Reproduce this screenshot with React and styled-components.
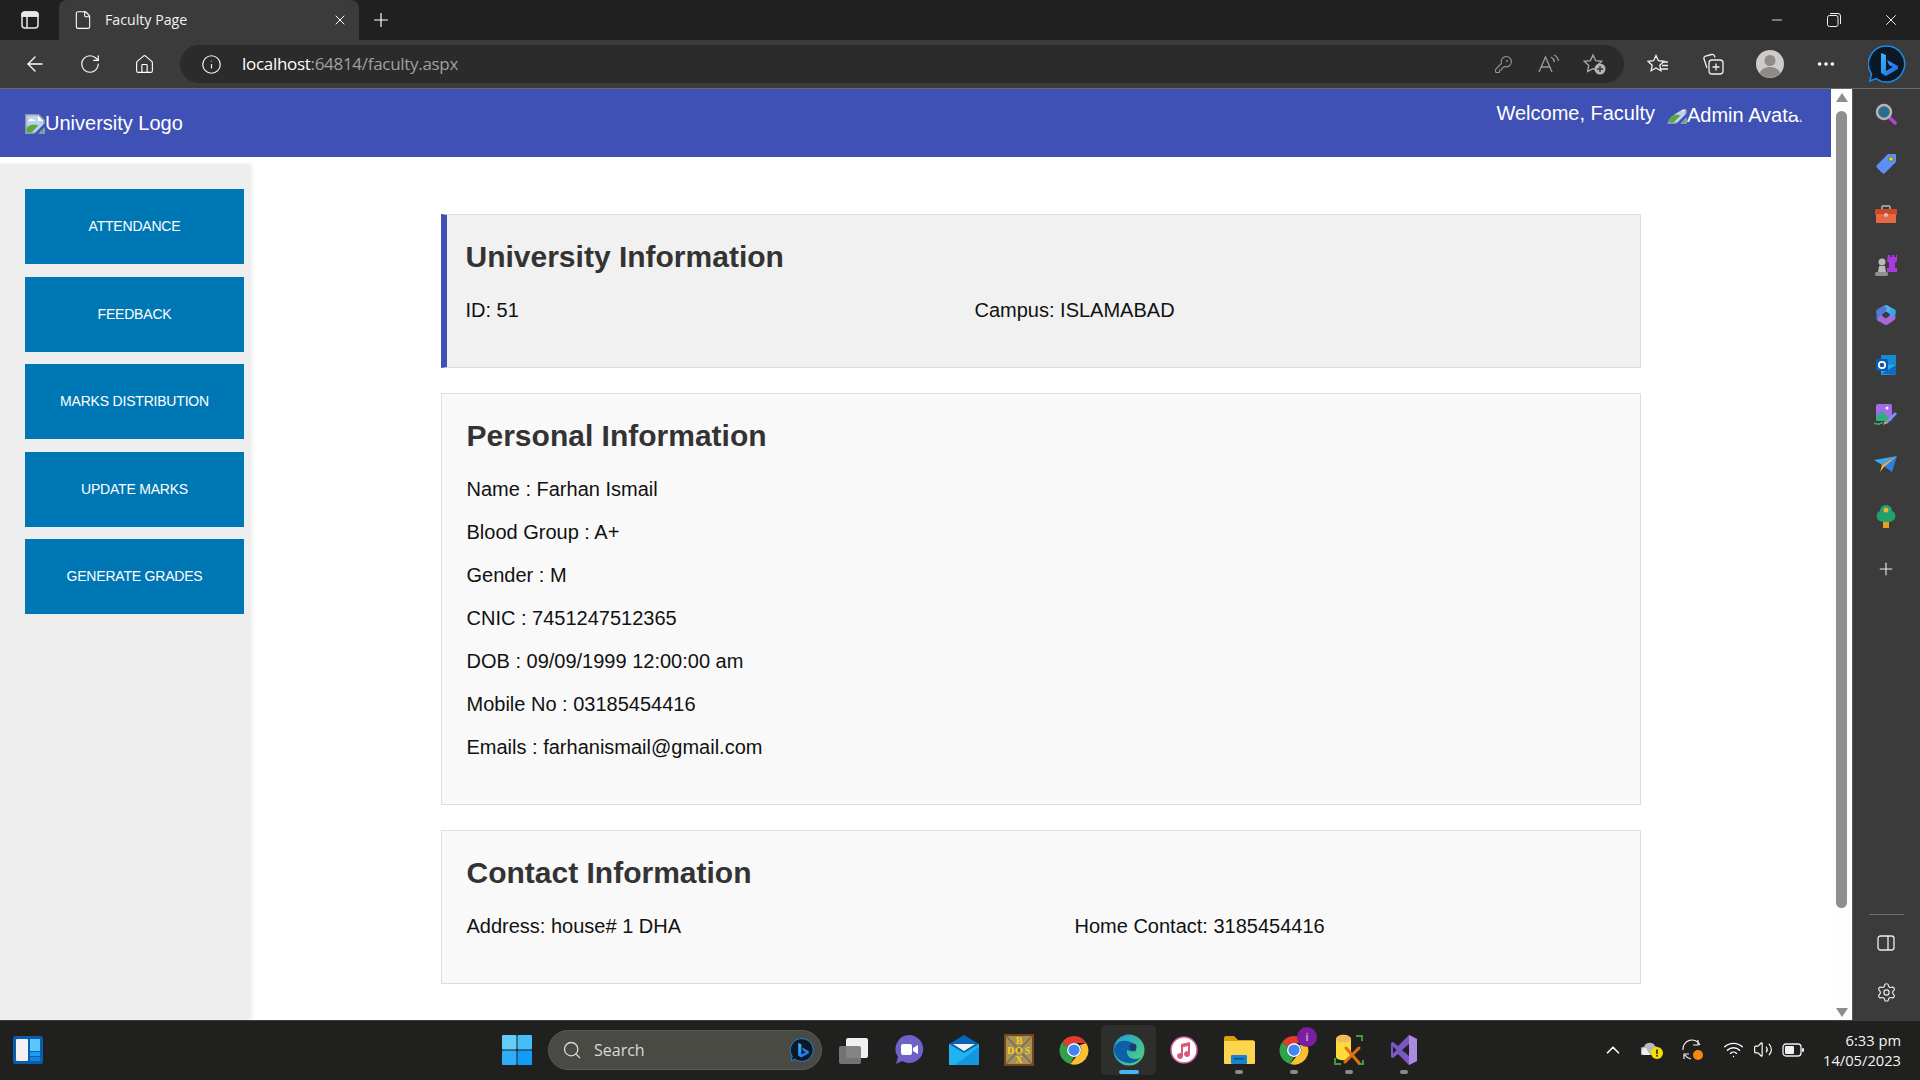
import React from "react";
import styled, { createGlobalStyle } from "styled-components";
import {
  ArrowLeft,
  RotateCw,
  Home,
  Info,
  KeyRound,
  Plus,
  X,
  Minus,
  Search,
  ChevronUp,
  Wifi,
  Volume2,
  Ellipsis,
  Settings,
  File,
} from "lucide-react";

const GlobalStyle = createGlobalStyle`
  html, body {
    margin: 0;
    padding: 0;
    height: 100%;
    overflow: hidden;
    background: #fff;
  }
  * {
    box-sizing: border-box;
  }
`;

const Screen = styled.div`
  width: 1920px;
  height: 1080px;
  display: flex;
  flex-direction: column;
  font-family: "Liberation Sans", Arial, sans-serif;
`;

/* browser chrome */
const TabStrip = styled.div`
  height: 40px;
  flex: none;
  background: #202020;
  display: flex;
  align-items: stretch;
  color: #fff;
`;

const TabToggle = styled.div`
  width: 59px;
  display: flex;
  align-items: center;
  justify-content: center;
`;

const Tab = styled.div`
  width: 300px;
  background: #3b3b3b;
  border-radius: 8px 8px 0 0;
  display: flex;
  align-items: center;
  padding: 0 11px 0 14px;
`;

const TabTitle = styled.span`
  flex: 1;
  margin-left: 12px;
  margin-bottom: 2px;
  font-family: "Open Sans", sans-serif;
  font-size: 14.2px;
  color: #f2f2f2;
  white-space: nowrap;
`;

const NewTab = styled.div`
  width: 44px;
  display: flex;
  align-items: center;
  justify-content: center;
`;

const WindowControls = styled.div`
  margin-left: auto;
  display: flex;
  padding-right: 1px;
`;

const WindowButton = styled.div`
  width: 57px;
  display: flex;
  align-items: center;
  justify-content: center;
`;

const Toolbar = styled.div`
  height: 49px;
  flex: none;
  background: #3b3b3b;
  border-bottom: 1px solid #6a6a6a;
  display: flex;
  align-items: flex-start;
  padding: 5px 0 0 7px;
  color: #fff;
`;

const ToolButton = styled.div`
  width: ${(p) => p.$w || 55}px;
  height: 38px;
  flex: none;
  display: flex;
  align-items: center;
  justify-content: center;
`;

const AddressBar = styled.div`
  width: 1443.5px;
  margin-left: 8px;
  height: 38px;
  background: #2b2b2b;
  border-radius: 19px;
  display: flex;
  align-items: center;
  padding: 0 6px 0 21px;
`;

const AddressText = styled.div`
  flex: 1;
  margin-left: 20px;
  margin-bottom: 2px;
  font-family: "Open Sans", sans-serif;
  font-size: 17px;
  letter-spacing: -0.3px;
  color: #a0a0a0;
  white-space: nowrap;
  strong {
    font-weight: 400;
    color: #fff;
  }
`;

const AddressAction = styled.div`
  width: 45.5px;
  display: flex;
  align-items: center;
  justify-content: center;
  color: #9a9a9a;
`;

const ToolbarGroup = styled.div`
  display: flex;
  margin-left: 7px;
`;

const BingSlot = styled.div`
  width: 58px;
  height: 38px;
  margin-left: 4px;
  display: flex;
  align-items: center;
  justify-content: center;
`;

/* page */
const Viewport = styled.div`
  flex: 1;
  min-height: 0;
  display: flex;
`;

const Page = styled.div`
  width: 1831px;
  flex: none;
  display: flex;
  flex-direction: column;
  background: #fff;
`;

const Header = styled.header`
  height: 68px;
  flex: none;
  background: #3f51b5;
  color: #fff;
  display: flex;
  justify-content: space-between;
  align-items: flex-start;
  padding: 0 28px 0 25px;
  font-size: 20px;
`;

const Logo = styled.div`
  display: flex;
  align-items: center;
  margin-top: 23px;
`;

const UserArea = styled.div`
  display: flex;
  align-items: flex-start;
  margin-top: 12px;
`;

const Welcome = styled.span`
  line-height: 24px;
`;

/* the avatar image failed to load, its alt text is cut by the round mask */
const AvatarBox = styled.div`
  width: 136px;
  height: 50px;
  margin-left: 12px;
  padding-top: 3px;
  display: flex;
  align-items: flex-start;
  border-radius: 50%;
  overflow: hidden;
  white-space: nowrap;
  line-height: 22px;
`;

const Body = styled.div`
  flex: 1;
  min-height: 0;
  display: flex;
`;

const SideNav = styled.nav`
  width: 250px;
  flex: none;
  margin-top: 7px;
  background: #eee;
  box-shadow: 2px 0 5px rgba(0, 0, 0, 0.08);
  display: flex;
  flex-direction: column;
  gap: 12.5px;
  padding: 25px 6px 0 25px;
`;

const NavButton = styled.button`
  height: 75px;
  border: none;
  background: #0077b5;
  color: #fff;
  font-family: "Liberation Sans", Arial, sans-serif;
  font-size: 14px;
  letter-spacing: -0.2px;
  padding: 0 0 1px;
`;

const Main = styled.main`
  flex: 1;
  display: flex;
  flex-direction: column;
  align-items: center;
  padding-top: 57px;
  gap: 25px;
`;

const Card = styled.section`
  width: 1200px;
  height: ${(p) => p.$h}px;
  background: ${(p) => (p.$accent ? "#f1f1f1" : "#f9f9f9")};
  border: 1px solid #ddd;
  border-left: ${(p) => (p.$accent ? "6px solid #3f51b5" : "1px solid #ddd")};
  padding: ${(p) => (p.$accent ? "20px 19px" : "20px 25px")};
`;

const CardTitle = styled.h2`
  margin: 0 0 17px;
  font-size: 30px;
  line-height: 44px;
  font-weight: 700;
  color: #333;
`;

const Fields = styled.div`
  display: grid;
  grid-template-columns: ${(p) => p.$first}px 1fr;
`;

const Line = styled.p`
  margin: 0;
  height: 43px;
  font-size: 20px;
  line-height: 29px;
  color: #111;
`;

/* scrollbar and edge rail */
const Scrollbar = styled.div`
  width: 21px;
  flex: none;
  background: #fdfdfd;
  display: flex;
  flex-direction: column;
  align-items: center;
  padding: 4px 0 3px;
`;

const ScrollArrow = styled.div`
  width: 0;
  height: 0;
  border-left: 6px solid transparent;
  border-right: 6px solid transparent;
  ${(p) => (p.$down ? "border-top" : "border-bottom")}: 9px solid #8c8c8c;
`;

const ScrollThumb = styled.div`
  width: 11px;
  height: 797px;
  margin-top: 9px;
  margin-bottom: auto;
  background: #8e8e8e;
  border-radius: 6px;
`;

const EdgeRail = styled.aside`
  width: 68px;
  flex: none;
  background: #3b3b3b;
  border-left: 1px solid #5a5a5a;
  display: flex;
  flex-direction: column;
  align-items: center;
  color: #eee;
`;

const RailSlot = styled.div`
  height: 50.2px;
  flex: none;
  margin-top: ${(p) => p.$gap || 0}px;
  margin-right: 1px;
  display: flex;
  align-items: center;
  justify-content: center;
`;

const RailRule = styled.div`
  width: 35px;
  height: 1px;
  flex: none;
  margin-top: auto;
  background: #6f6f6f;
`;

const RailFoot = styled.div`
  display: flex;
  flex-direction: column;
  align-items: center;
  padding: 3px 0 2px;
`;

/* taskbar */
const Taskbar = styled.footer`
  height: 60px;
  flex: none;
  background: #20201e;
  border-top: 1px solid #3f3f3f;
  display: flex;
  align-items: center;
  padding-bottom: 2px;
  color: #fff;
`;

const Widgets = styled.div`
  width: 502px;
  padding-left: 13px;
  display: flex;
  align-items: center;
`;

const StartSlot = styled.div`
  width: 46px;
  display: flex;
  align-items: center;
`;

const SearchPill = styled.div`
  width: 274px;
  height: 40px;
  background: #4a4a45;
  border: 1px solid #5b5b56;
  border-radius: 20px;
  display: flex;
  align-items: center;
  padding: 0 7px 0 13px;
  color: #d8d8d8;
`;

const SearchLabel = styled.span`
  flex: 1;
  margin-left: 12px;
  font-family: "Open Sans", sans-serif;
  font-size: 16px;
`;

const AppRow = styled.div`
  display: flex;
  margin-left: 4px;
`;

const AppSlot = styled.div`
  position: relative;
  width: 55px;
  height: 50px;
  display: flex;
  align-items: center;
  justify-content: center;
  border-radius: 5px;
  background: ${(p) => (p.$active ? "#2e2e2c" : "transparent")};
`;

const RunDot = styled.span`
  position: absolute;
  bottom: 1px;
  left: 50%;
  transform: translateX(-50%);
  width: ${(p) => (p.$active ? 20 : 8)}px;
  height: 4px;
  border-radius: 2px;
  background: ${(p) => (p.$active ? "#45b5f5" : "#8a8a8a")};
`;

const ChromeBadge = styled.span`
  position: absolute;
  top: 2px;
  right: 4px;
  width: 20px;
  height: 20px;
  border-radius: 50%;
  background: #7b1fa2;
  color: #c9a0dc;
  font-size: 11px;
  font-weight: 700;
  display: flex;
  align-items: center;
  justify-content: center;
`;

const Tray = styled.div`
  margin-left: auto;
  display: flex;
  align-items: center;
  padding-right: 19px;
`;

const TraySlot = styled.div`
  width: ${(p) => p.$w}px;
  display: flex;
  align-items: center;
  justify-content: center;
`;

const Clock = styled.div`
  margin-left: 10px;
  font-family: "Open Sans", sans-serif;
  font-size: 14.7px;
  line-height: 20px;
  text-align: right;
  color: #f4f4f4;
`;

const BrokenImage = () => (
  <svg width="20" height="20" viewBox="0 0 20 20" style={{ flex: "none" }}>
    <path d="M0 0h14l6 6v14H0z" fill="#8f96a8" />
    <path d="M1.500 1.500h11.500l5.500 5.500v11.500h-17z" fill="#bcd3ef" />
    <path d="M13 1.500 18.500 7H13z" fill="#fff" />
    <path d="M3.500 7c.6-2 3-3 4.500-1.400 1.400-.3 2.500.4 2.500 1.400z" fill="#fff" />
    <path d="M1.500 18.500V14c3-3.500 7-4.500 12-2.500l-7 7z" fill="#58a83f" />
    <path d="M9 20 20 9v4l-7 7z" fill="#3f51b5" />
    <path d="M15 18.500l3.500-3.500v3.500z" fill="#58a83f" />
  </svg>
);

const Bing = ({ size = 38 }) => (
  <svg width={size} height={size} viewBox="0 0 38 38">
    <defs>
      <linearGradient id="bingB" x1="0" y1="0" x2="1" y2="1">
        <stop offset="0" stopColor="#37bdff" />
        <stop offset="1" stopColor="#1c5fe0" />
      </linearGradient>
    </defs>
    <path d="M19 1a18 18 0 1 1-11 32.500L2 36l1.500-7A18 18 0 0 1 19 1z" fill="#0d1826" stroke="#1a8be8" strokeWidth="1.500" />
    <path d="M13 8l5 2v16l7-4-4-2-2-5 11 6v3l-12 7-5-3z" fill="url(#bingB)" />
  </svg>
);

const TabToggleIcon = () => (
  <svg width="18" height="20" viewBox="0 0 18 20" fill="none" stroke="#e8e8e8" strokeWidth="1.500">
    <rect x="1" y="2" width="16" height="16" rx="3" />
    <path d="M1 6h16M6 6v12" />
    <path d="M1 5a3 3 0 0 1 3-3h10a3 3 0 0 1 3 3v1H1z" fill="#e8e8e8" />
  </svg>
);

const RestoreIcon = () => (
  <svg width="14" height="14" viewBox="0 0 14 14" fill="none" stroke="#eee" strokeWidth="1">
    <rect x="0.500" y="2.500" width="10.500" height="11" rx="2" />
    <path d="M3 .5h8a2.500 2.500 0 0 1 2.500 2.500v8" />
  </svg>
);

const ReadAloud = () => (
  <svg width="22" height="20" viewBox="0 0 22 20" fill="none" stroke="#9a9a9a" strokeWidth="1.300">
    <path d="M1 18 7.500 3 14 18M3.500 13h8" />
    <path d="M13 3c2 1 3 3 3.500 5M16 1c2.500 1 4 3.500 4.500 6" />
  </svg>
);

const FavAdd = () => (
  <svg width="24" height="22" viewBox="0 0 24 22">
    <path d="M10 2l2.600 5.600 6.200.7-4.600 4.200 1.200 6.100L10 15.600l-5.400 3 1.200-6.100L1.200 8.300l6.200-.7z" fill="none" stroke="#a8a8a8" strokeWidth="1.300" />
    <circle cx="17" cy="16" r="5.500" fill="#b5b5b5" />
    <path d="M17 13v6M14 16h6" stroke="#333" strokeWidth="1.400" />
  </svg>
);

const Favorites = () => (
  <svg width="22" height="20" viewBox="0 0 22 20" fill="none" stroke="#f0f0f0" strokeWidth="1.300">
    <path d="M9 1.500l2.400 5.200 5.600.6-4.200 3.900 1.100 5.600L9 14l-4.900 2.800 1.100-5.600L1 7.300l5.600-.6z" />
    <path d="M15 8h6M15 11.500h6M14 15h7" />
  </svg>
);

const Collections = () => (
  <svg width="22" height="22" viewBox="0 0 22 22" fill="none" stroke="#f0f0f0" strokeWidth="1.300">
    <path d="M5 15 2 6c-.4-1.500.3-2.500 1.500-3l6-1.500c1.500-.3 2.500.3 3 1.500l.4 1.500" />
    <rect x="7" y="7" width="14" height="14" rx="3" />
    <path d="M14 10.500v7M10.500 14h7" />
  </svg>
);

const ProfileAvatar = () => (
  <svg width="28" height="28" viewBox="0 0 28 28">
    <circle cx="14" cy="14" r="14" fill="#cfccc8" />
    <circle cx="14" cy="10.500" r="5.500" fill="#8f8b87" />
    <path d="M3.500 23c2-4 6-6 10.500-6s8.500 2 10.500 6a14 14 0 0 1-21 0z" fill="#8f8b87" />
  </svg>
);

const RailSearch = () => (
  <svg width="22" height="22" viewBox="0 0 22 22">
    <path d="M14 14l6 6" stroke="#b93fd6" strokeWidth="3.500" strokeLinecap="round" />
    <circle cx="9" cy="9" r="7" fill="#2c6c94" stroke="#b4b4b4" strokeWidth="2.500" />
  </svg>
);

const RailTag = () => (
  <svg width="22" height="22" viewBox="0 0 22 22">
    <path d="M13 1h7a1 1 0 0 1 1 1v7L10 20a2 2 0 0 1-2.800 0L2 14.800A2 2 0 0 1 2 12z" fill="#5f8ff5" />
    <circle cx="16" cy="6" r="2.300" fill="#f5d020" stroke="#374" strokeWidth=".8" />
  </svg>
);

const RailToolbox = () => (
  <svg width="24" height="20" viewBox="0 0 24 20">
    <path d="M8 6V3a1 1 0 0 1 1-1h6a1 1 0 0 1 1 1v3" fill="none" stroke="#b9b9b9" strokeWidth="1.500" />
    <rect x="1" y="5" width="22" height="6" rx="1" fill="#c9482a" />
    <rect x="2" y="10" width="20" height="9" rx="1" fill="#e8693f" />
    <circle cx="12" cy="11" r="2" fill="#c8c8c8" />
  </svg>
);

const RailChess = () => (
  <svg width="24" height="24" viewBox="0 0 24 24">
    <path d="M14 2h2v2h2V2h2v2h2V2h1v6l-2 2v5h2v4H13v-4h2v-5l-2-2z" fill="#a83ae0" />
    <circle cx="8" cy="9" r="3.500" fill="#b9b9b9" />
    <path d="M5 13h6l1 6H4z" fill="#b9b9b9" />
    <rect x="1" y="19" width="13" height="4" rx="1.500" fill="#8f8f8f" />
  </svg>
);

const RailCopilot = () => (
  <svg width="24" height="26" viewBox="0 0 24 24" fill="none" strokeWidth="6" strokeLinejoin="round" strokeLinecap="round">
    <path d="M18.500 9 12 5 5.500 9" stroke="#4fb4ea" />
    <path d="M5.500 15.500V8.500L9.500 6" stroke="#4f78d8" />
    <path d="M18.500 14.500 12 19 7 16" stroke="#a868d8" />
    <path d="M18.500 8.500V11" stroke="#39a4e6" />
  </svg>
);

const RailOutlook = () => (
  <svg width="22" height="22" viewBox="0 0 22 22">
    <rect x="6" y="1" width="15" height="20" rx="1" fill="#1a8ad4" />
    <path d="M6 11h15v10H6z" fill="#28a8ea" />
    <path d="M6 20l15-9v10z" fill="#0f6cbd" />
    <rect x="1" y="5" width="12" height="12" rx="1.500" fill="#0a5cb0" />
    <circle cx="7" cy="11" r="3.200" fill="none" stroke="#fff" strokeWidth="1.700" />
  </svg>
);

const RailDesigner = () => (
  <svg width="24" height="24" viewBox="0 0 24 24">
    <rect x="2" y="1" width="16" height="17" rx="2" fill="#a36be8" />
    <path d="M2 14l6-6 5 5 5 5H4a2 2 0 0 1-2-2z" fill="#2fae7c" />
    <circle cx="13" cy="5" r="1.500" fill="#fff" />
    <path d="M11 19 21 9l2 2-10 10z" fill="#7d8ff0" />
    <path d="M9 22l2-4 2 2z" fill="#f0b429" />
    <path d="M0 21c2-2 3 1 5 0s3-2 4-1" fill="none" stroke="#2fae7c" strokeWidth="1.500" />
  </svg>
);

const RailPlane = () => (
  <svg width="24" height="18" viewBox="0 0 24 18">
    <path d="M0 4 23 0 8 9z" fill="#3ca7f0" />
    <path d="M23 0 8 9l10 7z" fill="#2b7fe0" />
    <path d="M23 0 8 9l-2 7 4-5z" fill="#f2b134" />
  </svg>
);

const RailTree = () => (
  <svg width="20" height="24" viewBox="0 0 20 24">
    <rect x="7" y="17" width="6" height="7" fill="#e8a020" />
    <path d="M10 1c4 0 6 3 6 6 3 1 4 4 3 7-1 3-4 4-9 4s-8-1-9-4c-1-3 0-6 3-7 0-3 2-6 6-6z" fill="#23a06b" />
    <circle cx="10" cy="6" r="2.500" fill="#f2b134" />
  </svg>
);

const PanelIcon = () => (
  <svg width="18" height="16" viewBox="0 0 18 16" fill="none" stroke="#eee" strokeWidth="1.300">
    <rect x="1" y="1" width="16" height="14" rx="2.500" />
    <path d="M11 1v14" />
  </svg>
);

const WidgetsIcon = () => (
  <svg width="30" height="28" viewBox="0 0 30 28">
    <rect width="30" height="28" rx="2" fill="#0b5cad" />
    <rect x="3" y="3" width="12" height="22" rx="1" fill="#f2f2f2" />
    <rect x="17" y="3" width="10" height="12" fill="#58c8fa" />
    <rect x="17" y="16" width="10" height="4" fill="#1c9cf0" />
    <rect x="17" y="21" width="10" height="4" fill="#1285e0" />
  </svg>
);

const WindowsLogo = () => (
  <svg width="30" height="30" viewBox="0 0 30 30">
    <rect width="14.500" height="14.500" rx="1" fill="#63cdf8" />
    <rect x="15.500" width="14.500" height="14.500" rx="1" fill="#45bdf8" />
    <rect y="15.500" width="14.500" height="14.500" rx="1" fill="#2eaef8" />
    <rect x="15.500" y="15.500" width="14.500" height="14.500" rx="1" fill="#129cfa" />
  </svg>
);

const TaskView = () => (
  <svg width="30" height="30" viewBox="0 0 30 30">
    <rect x="7" y="3" width="22" height="20" rx="2" fill="#f0f0f0" />
    <rect x="0" y="11" width="22" height="18" rx="2" fill="#7b7b7b" opacity=".92" />
  </svg>
);

const Teams = () => (
  <svg width="30" height="32" viewBox="0 0 30 32">
    <path d="M15 1a14 14 0 1 1-7 26l-6 3 2-7A14 14 0 0 1 15 1z" fill="#6e62c9" />
    <rect x="7" y="10" width="11" height="11" rx="2" fill="#fff" />
    <path d="M19 14l5-3v9l-5-3z" fill="#fff" />
  </svg>
);

const Mail = () => (
  <svg width="30" height="30" viewBox="0 0 30 30">
    <path d="M15 0 30 9v21H0V9z" fill="#0a64b5" />
    <path d="M0 9l15 9 15-9v21H0z" fill="#20b4ef" />
    <path d="M4 9h22l-11 7z" fill="#f4f4f4" />
    <path d="M30 12v18H6z" fill="#1090dd" opacity=".8" />
  </svg>
);

const DosBox = () => (
  <svg width="30" height="32" viewBox="0 0 30 32">
    <rect width="30" height="32" fill="#7a4418" />
    <rect x="2" y="2" width="26" height="28" fill="#a39160" />
    <path d="M2 2l26 28M28 2 2 30" stroke="#7d6d45" strokeWidth="1.500" />
    <g fill="#f9cf1d" fontFamily="Liberation Serif, serif" fontSize="10" fontWeight="700" textAnchor="middle">
      <text x="15" y="10">B</text>
      <text x="6.500" y="19.500">D</text>
      <text x="15" y="19.500">O</text>
      <text x="23.500" y="19.500">S</text>
      <text x="15" y="29">X</text>
    </g>
  </svg>
);

const Chrome = () => (
  <svg width="30" height="32" viewBox="0 0 32 32">
    <path d="M16 1a15 15 0 0 1 13 7.500H16a7.500 7.500 0 0 0-7 4.500L3.500 7.500A15 15 0 0 1 16 1z" fill="#e33b2e" />
    <path d="M3.500 7.500 9 13a7.500 7.500 0 0 0 7 10.500L12 31A15 15 0 0 1 3.500 7.500z" fill="#2fa24a" />
    <path d="M29 8.500A15 15 0 0 1 12 31l6.500-8A7.500 7.500 0 0 0 22 11z" fill="#fbc02d" />
    <circle cx="16" cy="16" r="7.500" fill="#fff" />
    <circle cx="16" cy="16" r="6" fill="#4285f4" />
  </svg>
);

const Edge = () => (
  <svg width="32" height="32" viewBox="0 0 32 32">
    <defs>
      <linearGradient id="edgeTop" x1="0" y1="0" x2="1" y2="1">
        <stop offset="0" stopColor="#1f9be0" />
        <stop offset="1" stopColor="#51d66f" />
      </linearGradient>
    </defs>
    <circle cx="16" cy="16" r="15.500" fill="url(#edgeTop)" />
    <path d="M1 17C1 9 8 6 14 7c6 1 10 5 9 10-3 1-7 0-9-1-1 4 2 9 8 9 2 0 4-.5 6-1.500A15.500 15.500 0 0 1 1 17z" fill="#0d5fa8" />
    <circle cx="20" cy="13" r="3.500" fill="#1c3a6e" />
  </svg>
);

const Itunes = () => (
  <svg width="28" height="30" viewBox="0 0 28 30">
    <circle cx="14" cy="15" r="13" fill="#fff" stroke="#d65aa0" strokeWidth="1.500" />
    <path d="M11 9l9-2v12a3 3 0 1 1-2-2.800V11l-5 1.200V21a3 3 0 1 1-2-2.800z" fill="#e2547a" />
  </svg>
);

const Folder = () => (
  <svg width="32" height="30" viewBox="0 0 32 30">
    <path d="M1 3a2 2 0 0 1 2-2h8l4 4h15a1 1 0 0 1 1 1v5H1z" fill="#d9a010" />
    <rect x="1" y="6" width="31" height="23" rx="1" fill="#fdd44e" />
    <rect x="8" y="20" width="16" height="9" rx="1" fill="#1682d0" />
    <rect x="11" y="23" width="10" height="1.500" fill="#0a4f8a" />
  </svg>
);

const Xampp = () => (
  <svg width="32" height="32" viewBox="0 0 32 32">
    <path d="M3 5a7 4 0 0 1 15 0v18a7 3 0 0 1-15 0z" fill="#fbdc3a" />
    <ellipse cx="10.500" cy="5" rx="7.500" ry="3.500" fill="#f2b85f" />
    <path d="M23 2h6v5M2 24v6h6M25 30h5v-4" fill="none" stroke="#3c9a3f" strokeWidth="2" />
    <path d="M12 28 26 14M13 14l13 15" stroke="#e07010" strokeWidth="3" strokeLinecap="round" />
  </svg>
);

const VisualStudio = () => (
  <svg width="28" height="32" viewBox="0 0 28 32">
    <path d="M19 1l8 4v22l-8 4-11-11-5 4-2-1V9l2-1 5 4z" fill="#7b57c4" />
    <path d="M19 1l8 4v22l-8 4z" fill="#a98ae0" />
    <path d="M19 10v12l-7-6z" fill="#20201e" />
    <path d="M3 12.500v7l3.500-3.500z" fill="#20201e" />
  </svg>
);

const OneDrive = () => (
  <svg width="24" height="20" viewBox="0 0 24 20">
    <path d="M2 15a4 4 0 0 1 1-8 6 6 0 0 1 11-1 5 5 0 0 1 4 6v3z" fill="#b9b9b9" />
    <path d="M1 11a3 3 0 0 1 4-3l4 7H3a3 3 0 0 1-2-4z" fill="#f0f0f0" />
    <circle cx="16" cy="13" r="6" fill="#f6dc00" />
    <rect x="15.200" y="9.500" width="1.600" height="4.500" fill="#222" />
    <rect x="15.200" y="15" width="1.600" height="1.600" fill="#222" />
  </svg>
);

const SyncDot = () => (
  <svg width="22" height="22" viewBox="0 0 22 22" fill="none" stroke="#f0f0f0" strokeWidth="1.200">
    <path d="M1 11A9 9 0 0 1 18 6M16 1v5h-5" />
    <path d="M9 20a9 9 0 0 1-6-4M2 20v-5h5" />
    <circle cx="16" cy="16" r="5" fill="#f7890f" stroke="none" />
  </svg>
);

const Battery = () => (
  <svg width="22" height="14" viewBox="0 0 22 14" fill="none">
    <rect x="1" y="1" width="18" height="12" rx="3" stroke="#f0f0f0" strokeWidth="1.300" />
    <rect x="3" y="3" width="9" height="8" rx="1" fill="#f0f0f0" />
    <rect x="20" y="5" width="2" height="4" rx="1" fill="#f0f0f0" />
  </svg>
);

const navItems = ["ATTENDANCE", "FEEDBACK", "MARKS DISTRIBUTION", "UPDATE MARKS", "GENERATE GRADES"];

const personal = [
  "Name : Farhan Ismail",
  "Blood Group : A+",
  "Gender : M",
  "CNIC : 7451247512365",
  "DOB : 09/09/1999 12:00:00 am",
  "Mobile No : 03185454416",
  "Emails : farhanismail@gmail.com",
];

const railIcons = [RailSearch, RailTag, RailToolbox, RailChess, RailCopilot, RailOutlook, RailDesigner, RailPlane, RailTree];

const App = () => {
  return (
    <Screen>
      <GlobalStyle />
      <TabStrip>
        <TabToggle>
          <TabToggleIcon />
        </TabToggle>
        <Tab>
          <File size={20} strokeWidth={1.3} />
          <TabTitle>Faculty Page</TabTitle>
          <X size={16} strokeWidth={1.5} />
        </Tab>
        <NewTab>
          <Plus size={22} strokeWidth={1.3} />
        </NewTab>
        <WindowControls>
          <WindowButton>
            <Minus size={16} strokeWidth={1.2} />
          </WindowButton>
          <WindowButton>
            <RestoreIcon />
          </WindowButton>
          <WindowButton>
            <X size={18} strokeWidth={1.2} />
          </WindowButton>
        </WindowControls>
      </TabStrip>

      <Toolbar>
        <ToolButton>
          <ArrowLeft size={24} strokeWidth={1.3} />
        </ToolButton>
        <ToolButton>
          <RotateCw size={22} strokeWidth={1.3} />
        </ToolButton>
        <ToolButton>
          <Home size={21} strokeWidth={1.3} />
        </ToolButton>
        <AddressBar>
          <Info size={21} strokeWidth={1.4} color="#f0f0f0" />
          <AddressText>
            <strong>localhost</strong>:64814/faculty.aspx
          </AddressText>
          <AddressAction>
            <KeyRound size={19} strokeWidth={1.3} />
          </AddressAction>
          <AddressAction>
            <ReadAloud />
          </AddressAction>
          <AddressAction>
            <FavAdd />
          </AddressAction>
        </AddressBar>
        <ToolbarGroup>
          <ToolButton>
            <Favorites />
          </ToolButton>
          <ToolButton>
            <Collections />
          </ToolButton>
          <ToolButton $w={58}>
            <ProfileAvatar />
          </ToolButton>
          <ToolButton>
            <Ellipsis size={22} strokeWidth={2} />
          </ToolButton>
        </ToolbarGroup>
        <BingSlot>
          <Bing />
        </BingSlot>
      </Toolbar>

      <Viewport>
        <Page>
          <Header>
            <Logo>
              <BrokenImage />
              University Logo
            </Logo>
            <UserArea>
              <Welcome>Welcome, Faculty</Welcome>
              <AvatarBox>
                <BrokenImage />
                Admin Avatar
              </AvatarBox>
            </UserArea>
          </Header>
          <Body>
            <SideNav>
              {navItems.map((item) => (
                <NavButton key={item}>{item}</NavButton>
              ))}
            </SideNav>
            <Main>
              <Card $accent $h={154}>
                <CardTitle>University Information</CardTitle>
                <Fields $first={509}>
                  <Line>ID: 51</Line>
                  <Line>Campus: ISLAMABAD</Line>
                </Fields>
              </Card>
              <Card $h={412}>
                <CardTitle>Personal Information</CardTitle>
                {personal.map((line) => (
                  <Line key={line}>{line}</Line>
                ))}
              </Card>
              <Card $h={154}>
                <CardTitle>Contact Information</CardTitle>
                <Fields $first={608}>
                  <Line>Address: house# 1 DHA</Line>
                  <Line>Home Contact: 3185454416</Line>
                </Fields>
              </Card>
            </Main>
          </Body>
        </Page>
        <Scrollbar>
          <ScrollArrow />
          <ScrollThumb />
          <ScrollArrow $down />
        </Scrollbar>
        <EdgeRail>
          {railIcons.map((Icon, i) => (
            <RailSlot key={i}>
              <Icon />
            </RailSlot>
          ))}
          <RailSlot $gap={3.5}>
            <Plus size={20} strokeWidth={1.3} />
          </RailSlot>
          <RailRule />
          <RailFoot>
            <RailSlot>
              <PanelIcon />
            </RailSlot>
            <RailSlot>
              <Settings size={21} strokeWidth={1.3} />
            </RailSlot>
          </RailFoot>
        </EdgeRail>
      </Viewport>

      <Taskbar>
        <Widgets>
          <WidgetsIcon />
        </Widgets>
        <StartSlot>
          <WindowsLogo />
        </StartSlot>
        <SearchPill>
          <Search size={20} strokeWidth={1.6} />
          <SearchLabel>Search</SearchLabel>
          <Bing size={24} />
        </SearchPill>
        <AppRow>
          <AppSlot><TaskView /></AppSlot>
          <AppSlot><Teams /></AppSlot>
          <AppSlot><Mail /></AppSlot>
          <AppSlot><DosBox /></AppSlot>
          <AppSlot><Chrome /></AppSlot>
          <AppSlot $active>
            <Edge />
            <RunDot $active />
          </AppSlot>
          <AppSlot><Itunes /></AppSlot>
          <AppSlot>
            <Folder />
            <RunDot />
          </AppSlot>
          <AppSlot>
            <Chrome />
            <ChromeBadge>i</ChromeBadge>
            <RunDot />
          </AppSlot>
          <AppSlot>
            <Xampp />
            <RunDot />
          </AppSlot>
          <AppSlot>
            <VisualStudio />
            <RunDot />
          </AppSlot>
        </AppRow>
        <Tray>
          <TraySlot $w={40}><ChevronUp size={22} strokeWidth={1.8} /></TraySlot>
          <TraySlot $w={40}><OneDrive /></TraySlot>
          <TraySlot $w={40}><SyncDot /></TraySlot>
          <TraySlot $w={40}><Wifi size={21} strokeWidth={1.6} /></TraySlot>
          <TraySlot $w={20}><Volume2 size={21} strokeWidth={1.4} /></TraySlot>
          <TraySlot $w={40}><Battery /></TraySlot>
          <Clock>
            6:33 pm
            <br />
            14/05/2023
          </Clock>
        </Tray>
      </Taskbar>
    </Screen>
  );
};

export default App;
